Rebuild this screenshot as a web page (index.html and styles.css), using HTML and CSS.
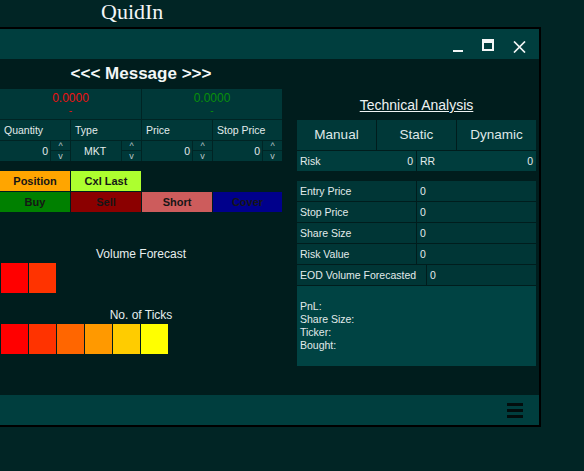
FILE: index.html
```html
<!DOCTYPE html>
<html>
<head>
<meta charset="utf-8">
<title>QuidIn</title>
<link rel="stylesheet" href="styles.css">
</head>
<body>
<div class="app-title">QuidIn</div>
<div class="window">
  <div class="titlebar">
    <svg class="ctl" width="10" height="14" viewBox="0 0 10 14"><rect x="0" y="11" width="10" height="2"/></svg>
    <svg class="ctl" width="12" height="12" viewBox="0 0 12 12"><path fill-rule="evenodd" d="M0 0H12V12H0Z M2 4V10H10V4Z"/></svg>
    <svg class="ctl ctl-close" width="13" height="12" viewBox="0 0 13 12"><path d="M1 0.5L12 11.5M12 0.5L1 11.5"/></svg>
  </div>
  <div class="content">
    <div class="left">
      <div class="message">&lt;&lt;&lt; Message &gt;&gt;&gt;</div>
      <div class="order-grid">
        <div class="val val-red"><span class="num">0.0000</span><span class="dash">-</span></div>
        <div class="val val-green"><span class="num">0.0000</span><span class="dash">-</span></div>
        <div class="hdr">Quantity</div>
        <div class="hdr">Type</div>
        <div class="hdr">Price</div>
        <div class="hdr">Stop Price</div>
        <div class="inp"><span class="inp-val">0</span><span class="spin"><span>^</span><span>v</span></span></div>
        <div class="inp"><span class="inp-val center">MKT</span><span class="spin"><span>^</span><span>v</span></span></div>
        <div class="inp"><span class="inp-val">0</span><span class="spin"><span>^</span><span>v</span></span></div>
        <div class="inp"><span class="inp-val">0</span><span class="spin"><span>^</span><span>v</span></span></div>
      </div>
      <div class="btn-grid">
        <div class="btn btn-position">Position</div>
        <div class="btn btn-cxl">Cxl Last</div>
        <div class="btn btn-buy">Buy</div>
        <div class="btn btn-sell">Sell</div>
        <div class="btn btn-short">Short</div>
        <div class="btn btn-cover">Cover</div>
      </div>
      <div class="meter-title mt-vol">Volume Forecast</div>
      <div class="meter">
        <span class="mb c1"></span><span class="mb c2"></span>
      </div>
      <div class="meter-title mt-ticks">No. of Ticks</div>
      <div class="meter">
        <span class="mb c1"></span><span class="mb c2"></span><span class="mb c3"></span><span class="mb c4"></span><span class="mb c5"></span><span class="mb c6"></span>
      </div>
    </div>
    <div class="right">
      <div class="ta-title">Technical Analysis</div>
      <div class="tabs">
        <div class="tab">Manual</div>
        <div class="tab">Static</div>
        <div class="tab">Dynamic</div>
      </div>
      <div class="risk-row">
        <div class="risk-cell"><span>Risk</span><span>0</span></div>
        <div class="risk-cell"><span>RR</span><span>0</span></div>
      </div>
      <div class="details">
        <div class="drow"><div class="dlabel">Entry Price</div><div class="dval">0</div></div>
        <div class="drow"><div class="dlabel">Stop Price</div><div class="dval">0</div></div>
        <div class="drow"><div class="dlabel">Share Size</div><div class="dval">0</div></div>
        <div class="drow"><div class="dlabel">Risk Value</div><div class="dval">0</div></div>
        <div class="drow"><div class="dlabel wide">EOD Volume Forecasted</div><div class="dval">0</div></div>
        <div class="pnl">
          <div>PnL:</div>
          <div>Share Size:</div>
          <div>Ticker:</div>
          <div>Bought:</div>
        </div>
      </div>
    </div>
  </div>
  <div class="bottombar">
    <svg class="menu" width="16" height="15" viewBox="0 0 16 15"><rect y="0" width="16" height="3"/><rect y="6" width="16" height="3"/><rect y="12" width="16" height="3"/></svg>
  </div>
</div>
</body>
</html>
```

FILE: styles.css
```css
* { box-sizing: border-box; }
html, body { margin: 0; padding: 0; }
body {
  width: 584px;
  height: 471px;
  overflow: hidden;
  background: #012525;
  font-family: "Liberation Sans", Arial, sans-serif;
  color: #e2ebeb;
}
.app-title {
  height: 27px;
  padding-left: 101px;
  font-family: "Liberation Serif", "Times New Roman", serif;
  font-size: 22px;
  line-height: 23px;
  color: #f2f6f6;
}
.window {
  width: 541px;
  border: 2px solid #000;
  border-left: none;
}
.titlebar {
  height: 30px;
  background: #003e3e;
  display: flex;
  justify-content: flex-end;
  align-items: flex-start;
  gap: 19px;
  padding: 10px 13px 0 0;
}
.ctl { display: block; fill: #f2f6f6; }
.ctl-close { margin-top: 2px; }
.ctl-close path { stroke: #f2f6f6; stroke-width: 1.7; fill: none; }
.content {
  height: 336px;
  background: #001d1d;
  display: flex;
}
.left { width: 282px; }
.right { width: 239px; margin-left: 15px; }
.message {
  height: 30px;
  line-height: 30px;
  text-align: center;
  font-weight: bold;
  font-size: 17px;
  color: #f2f6f6;
}
.order-grid {
  display: grid;
  grid-template-columns: 70px 70px 70px 69px;
  grid-template-rows: 30px 20px 20px;
  gap: 1px;
  background: #002424;
}
.val {
  grid-column: span 2;
  background: #003838;
  display: flex;
  flex-direction: column;
  align-items: center;
  padding-top: 3px;
  font-size: 12px;
  line-height: 12px;
}
.val .dash { font-size: 10px; line-height: 13px; }
.val-red { color: #ee1111; }
.val-green { color: #0a900a; }
.hdr {
  background: #003838;
  font-size: 10.5px;
  line-height: 20px;
  padding-left: 4px;
}
.inp {
  background: #003838;
  display: flex;
  font-size: 10.5px;
}
.inp-val {
  flex: 1;
  text-align: right;
  padding-right: 2px;
  line-height: 20px;
}
.inp-val.center { text-align: center; }
.spin {
  width: 20px;
  border-left: 1px solid #002626;
  display: flex;
  flex-direction: column;
  font-size: 9px;
  color: #b8c6c6;
}
.spin span { height: 10px; line-height: 10px; text-align: center; }
.spin span:first-child { border-bottom: 1px solid #002626; height: 10px; }
.btn-grid {
  margin-top: 10px;
  display: grid;
  grid-template-columns: 70px 70px 70px 69px;
  grid-auto-rows: 20px;
  gap: 1px;
}
.btn {
  font-weight: bold;
  font-size: 11px;
  line-height: 20px;
  text-align: center;
  color: #161616;
}
.btn-position { background: #ffa500; }
.btn-cxl { background: #adff2f; }
.btn-buy { background: #008000; grid-row: 2; grid-column: 1; }
.btn-sell { background: #8b0000; grid-row: 2; grid-column: 2; }
.btn-short { background: #cd5c5c; grid-row: 2; grid-column: 3; }
.btn-cover { background: #00008b; grid-row: 2; grid-column: 4; }
.meter-title {
  text-align: center;
  font-size: 12px;
  line-height: 14px;
  color: #e6eeee;
}
.mt-vol { margin-top: 35px; }
.mt-ticks { margin-top: 15px; }
.meter {
  margin-top: 2px;
  display: flex;
  gap: 1px;
  padding-left: 1px;
  height: 30px;
}
.mb { width: 27px; height: 30px; display: block; }
.c1 { background: #ff0000; }
.c2 { background: #ff3300; }
.c3 { background: #ff6600; }
.c4 { background: #ff9900; }
.c5 { background: #ffcc00; }
.c6 { background: #ffff00; }
.ta-title {
  margin-top: 38px;
  font-size: 14px;
  line-height: 16px;
  text-align: center;
  text-decoration: underline;
  color: #eef3f3;
}
.tabs {
  margin-top: 7px;
  display: grid;
  grid-template-columns: 79px 79px 79px;
  gap: 1px;
  height: 30px;
}
.tab {
  background: #003838;
  font-size: 13.5px;
  line-height: 30px;
  text-align: center;
  color: #dfe8e8;
}
.risk-row {
  margin-top: 1px;
  display: grid;
  grid-template-columns: 119px 119px;
  gap: 1px;
  height: 20px;
}
.risk-cell {
  background: #003d3d;
  display: flex;
  justify-content: space-between;
  font-size: 10.5px;
  line-height: 20px;
  padding: 0 3px;
}
.details {
  margin-top: 10px;
  display: flex;
  flex-direction: column;
  gap: 1px;
}
.drow { display: flex; gap: 1px; height: 20px; }
.dlabel {
  width: 119px;
  background: #003636;
  padding-left: 3px;
  font-size: 10.5px;
  line-height: 20px;
}
.dlabel.wide { width: 129px; }
.dval {
  flex: 1;
  background: #003636;
  padding-left: 3px;
  font-size: 10.5px;
  line-height: 20px;
}
.pnl {
  height: 80px;
  background: #004343;
  padding: 14px 0 0 3px;
  font-size: 10.5px;
  line-height: 13px;
}
.bottombar {
  height: 30px;
  background: #003e3e;
  display: flex;
  justify-content: flex-end;
  align-items: flex-start;
  padding: 8px 16px 0 0;
}
.menu { display: block; fill: #030d0d; }
```
